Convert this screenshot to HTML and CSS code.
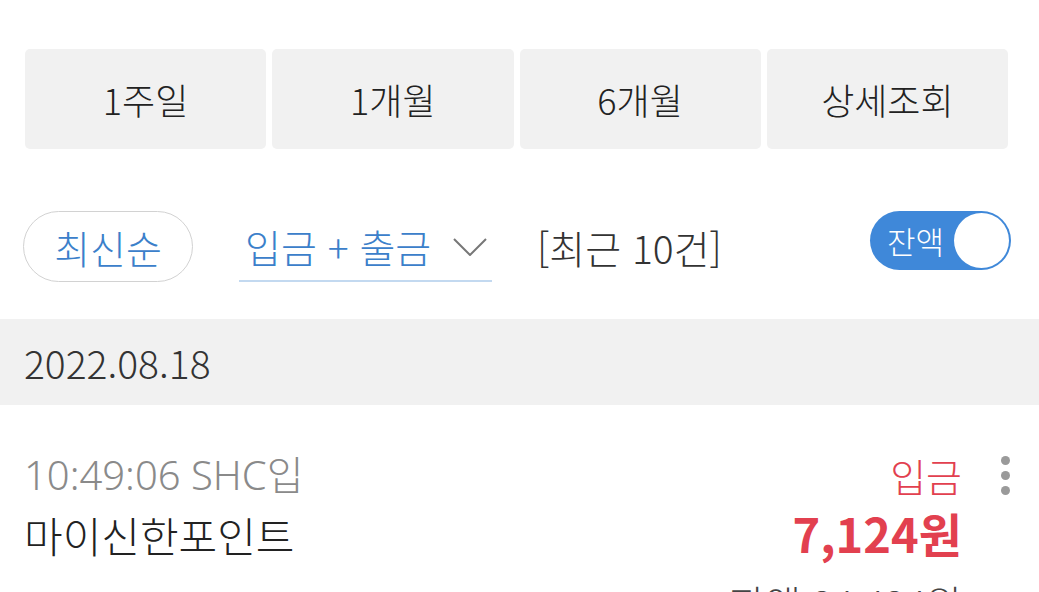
FILE: index.html
```html
<!DOCTYPE html>
<html lang="ko">
<head>
    <meta charset="UTF-8">
    <meta name="viewport" content="width=device-width, initial-scale=1.0">
    <title>거래내역조회</title>
    <link rel="stylesheet" href="styles.css">
</head>
<body>
    <div class="page">
        <div class="periods">
            <button class="period-btn">1주일</button>
            <button class="period-btn">1개월</button>
            <button class="period-btn">6개월</button>
            <button class="period-btn">상세조회</button>
        </div>

        <div class="filter-row">
            <button class="sort-pill">최신순</button>
            <div class="type-select">
                <span>입금 + 출금</span>
                <svg class="chevron" width="34" height="18" viewBox="0 0 34 18">
                    <polyline points="1,1 17,17 33,1" fill="none" stroke="#777" stroke-width="2"/>
                </svg>
            </div>
            <span class="count">[최근 10건]</span>
            <div class="balance-toggle">
                <span class="toggle-label">잔액</span>
                <span class="toggle-knob"></span>
            </div>
        </div>

        <div class="date-bar">2022.08.18</div>

        <div class="tx-row">
            <div class="tx-left">
                <div class="tx-time">10:49:06 SHC입</div>
                <div class="tx-name">마이신한포인트</div>
            </div>
            <div class="tx-right">
                <div class="tx-type">입금</div>
                <div class="tx-amount">7,124원</div>
                <div class="tx-balance">잔액 34,434원</div>
            </div>
            <div class="tx-more">
                <span class="dot"></span>
                <span class="dot"></span>
                <span class="dot"></span>
            </div>
        </div>
    </div>
</body>
</html>
```

FILE: styles.css
```css
:root {
    --blue: #3b80ca;
    --toggle-blue: #3f88d9;
    --red: #e2404f;
    --text-dark: #222222;
    --text-grey: #8a8a8a;
    --bg-grey: #f1f1f1;
}

* {
    margin: 0;
    padding: 0;
    box-sizing: border-box;
}

body {
    font-family: "Noto Sans CJK KR", "Noto Sans", sans-serif;
    font-weight: 300;
    background: #ffffff;
    color: var(--text-dark);
    width: 1039px;
    height: 592px;
    overflow: hidden;
}

.page {
    padding-top: 49px;
}

button {
    font-family: inherit;
    font-weight: inherit;
    border: none;
    background: none;
    color: inherit;
}

/* period tabs */
.periods {
    display: grid;
    grid-template-columns: repeat(4, 1fr);
    gap: 6px;
    padding: 0 31px 0 25px;
}

.period-btn {
    height: 100px;
    background: var(--bg-grey);
    border-radius: 5px;
    font-size: 36px;
    color: var(--text-dark);
}

/* filter row */
.filter-row {
    display: flex;
    align-items: center;
    height: 71px;
    margin-top: 62px;
    padding: 0 28px 0 23px;
}

.sort-pill {
    width: 170px;
    height: 71px;
    border: 1.5px solid #d2d2d2;
    border-radius: 36px;
    font-size: 39px;
    color: var(--blue);
}

.type-select {
    display: flex;
    align-items: center;
    justify-content: space-between;
    width: 253px;
    height: 71px;
    margin-left: 46px;
    padding: 0 5px 0 6px;
    border-bottom: 2px solid #c3d9f0;
    font-size: 39px;
    color: var(--blue);
}

.chevron {
    margin-top: 2px;
}

.count {
    margin-left: 45px;
    font-size: 39px;
    color: #333333;
}

.balance-toggle {
    display: flex;
    align-items: center;
    justify-content: space-between;
    align-self: flex-start;
    width: 141px;
    height: 59px;
    margin-left: auto;
    padding: 2px;
    background: var(--toggle-blue);
    border-radius: 30px;
}

.toggle-label {
    padding-left: 15px;
    font-size: 31px;
    color: #ffffff;
}

.toggle-knob {
    width: 55px;
    height: 55px;
    border-radius: 50%;
    background: #ffffff;
}

/* date header */
.date-bar {
    display: flex;
    align-items: center;
    height: 86px;
    margin-top: 37px;
    padding-left: 24px;
    background: var(--bg-grey);
    font-size: 39px;
    color: #333333;
}

/* transaction row */
.tx-row {
    display: flex;
    padding: 47px 29px 0 24px;
}

.tx-left {
    flex: 1;
}

.tx-time {
    line-height: 46px;
    font-family: "Noto Sans", "Noto Sans CJK KR", sans-serif;
    font-size: 40px;
    color: var(--text-grey);
}

.tx-name {
    margin-top: 14px;
    line-height: 46px;
    font-size: 42px;
    color: var(--text-dark);
}

.tx-right {
    text-align: right;
}

.tx-type {
    line-height: 46px;
    font-size: 39px;
    color: var(--red);
}

.tx-amount {
    margin-top: 10px;
    line-height: 50px;
    font-size: 47px;
    font-weight: 700;
    color: var(--red);
}

.tx-balance {
    margin-top: 21px;
    line-height: 46px;
    font-size: 39px;
    color: #444444;
}

.tx-more {
    display: flex;
    flex-direction: column;
    gap: 6px;
    margin-left: 39px;
    padding-top: 4px;
}

.dot {
    width: 9px;
    height: 9px;
    border-radius: 50%;
    background: #9a9a9a;
}
```
